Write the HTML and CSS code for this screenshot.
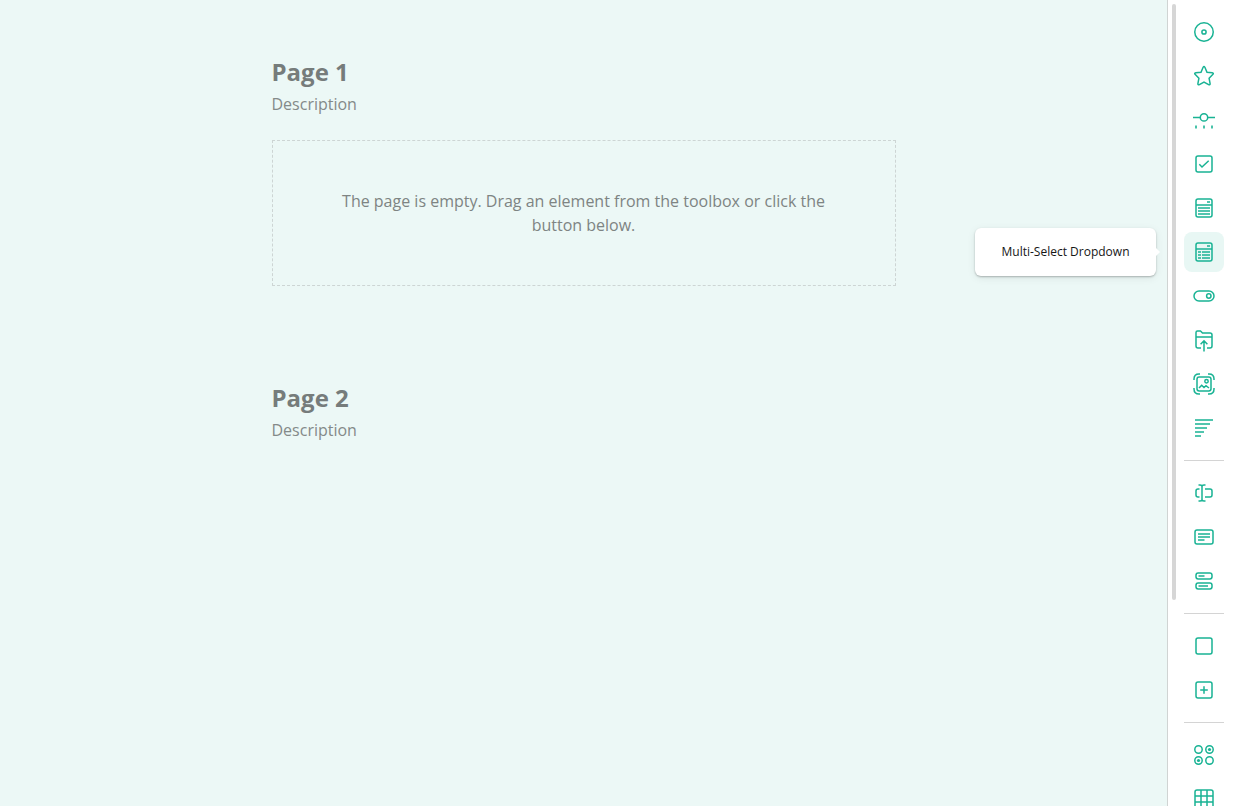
FILE: index.html
```html
<!DOCTYPE html>
<html lang="en">
<head>
<meta charset="utf-8">
<title>Survey designer</title>
<link rel="stylesheet" href="styles.css">
</head>
<body>
<div class="designer">
  <main class="surface">
    <section class="page">
      <h2 class="page-title">Page 1</h2>
      <p class="page-description">Description</p>
      <div class="placeholder"><p class="placeholder-text">The page is empty. Drag an element from the toolbox or click the button below.</p></div>
    </section>
    <section class="page">
      <h2 class="page-title">Page 2</h2>
      <p class="page-description">Description</p>
    </section>
  </main>
  <aside class="toolbox" aria-label="Toolbox">
    <div class="scroll-thumb"></div>
    <div class="group">
      <button class="tool" type="button" aria-label="Radio Button Group"><svg class="icon" viewBox="0 0 24 24"><circle cx="12" cy="12" r="9.25"/><circle cx="12" cy="12" r="2.1"/></svg></button>
      <button class="tool" type="button" aria-label="Rating Scale"><svg class="icon" viewBox="0 0 24 24"><path d="M11.1 3.3Q12 1.9 12.9 3.3L15 8.2L20.2 8.8Q22.2 9.2 20.7 10.5L17.1 14.3L18.1 19.5Q18.2 21.4 16.6 20.6L12 18L7.4 20.6Q5.8 21.4 5.9 19.5L6.9 14.3L3.3 10.5Q1.8 9.2 3.8 8.8L9 8.2Z"/></svg></button>
      <button class="tool" type="button" aria-label="Slider"><svg class="icon" viewBox="0 0 24 24"><circle cx="12" cy="9.4" r="3.7"/><path d="M1 9.4H8.3M15.7 9.4H23"/><path class="ticks" d="M4 17.5V20.5M12 17.5V20.5M20 17.5V20.5"/></svg></button>
      <button class="tool" type="button" aria-label="Checkboxes"><svg class="icon" viewBox="0 0 24 24"><rect x="4" y="4" width="16" height="16" rx="2"/><path d="M7.3 12.3L10 15L16.7 8.7"/></svg></button>
      <button class="tool" type="button" aria-label="Dropdown"><svg class="icon" viewBox="0 0 24 24"><rect x="4" y="3" width="16" height="18" rx="2"/><path d="M4 9H20M15 6H18M6 12H18M6 15H18M6 18H18"/></svg></button>
      <button class="tool tool-active" type="button" aria-label="Multi-Select Dropdown" aria-describedby="tip"><svg class="icon" viewBox="0 0 24 24"><rect x="4" y="3" width="16" height="18" rx="2"/><path d="M4 9H20M15 6H18M6 12H9M10 12H18M6 15H9M10 15H18M6 18H9M10 18H18"/></svg><span class="tooltip" id="tip" role="tooltip">Multi-Select Dropdown</span></button>
      <button class="tool" type="button" aria-label="Yes/No"><svg class="icon" viewBox="0 0 24 24"><rect x="2" y="7" width="20" height="10" rx="5"/><circle cx="16.8" cy="12" r="2.2"/></svg></button>
      <button class="tool" type="button" aria-label="File Upload"><svg class="icon" viewBox="0 0 24 24"><path d="M9 20H6Q4 20 4 18V4.5Q4 3 5.500 3H8.500L10.500 5H18Q20 5 20 7V18Q20 20 18 20H15M4 9H20M12 23.500V13M8.600 16.200L12 12.800L15.400 16.200"/></svg></button>
      <button class="tool" type="button" aria-label="Image Picker"><svg class="icon" viewBox="0 0 24 24"><rect x="5" y="5" width="14" height="14" rx="2.200"/><path d="M8 2H7Q2 2 2 7V8M16 2H17Q22 2 22 7V8M2 16V17Q2 22 7 22H8M22 16V17Q22 22 17 22H16M7 16L9.700 13.200L12 15.500L14 13.700L17 16"/><circle cx="14.500" cy="9.300" r="1.700"/></svg></button>
      <button class="tool" type="button" aria-label="Ranking"><svg class="icon" viewBox="0 0 24 24"><path d="M3 4H21M3 8H18M3 12H15M3 16H12M3 20H9"/></svg></button>
    </div>
    <hr class="separator">
    <div class="group">
      <button class="tool" type="button" aria-label="Single-Line Input"><svg class="icon" viewBox="0 0 24 24"><path d="M6.500 4H8Q10 4 10 5.500Q10 4 12 4H13.500M10 5V19M6.500 20H8Q10 20 10 18.500Q10 20 12 20H13.500M7.500 8H6Q4 8 4 10V14Q4 16 6 16H7.500M13 8H18Q20 8 20 10V14Q20 16 18 16H13"/></svg></button>
      <button class="tool" type="button" aria-label="Long Text"><svg class="icon" viewBox="0 0 24 24"><rect x="3" y="5" width="18" height="14" rx="2"/><path d="M6 9H18M6 12H18M6 15H12.500"/></svg></button>
      <button class="tool" type="button" aria-label="Multiple Textboxes"><svg class="icon" viewBox="0 0 24 24"><rect x="4" y="4" width="16" height="6" rx="2.200"/><rect x="4" y="14" width="16" height="6" rx="2.200"/><path d="M6.500 7H12.500M6.500 17H16"/></svg></button>
    </div>
    <hr class="separator">
    <div class="group">
      <button class="tool" type="button" aria-label="Panel"><svg class="icon" viewBox="0 0 24 24"><rect x="4" y="4" width="16" height="16" rx="2"/></svg></button>
      <button class="tool" type="button" aria-label="Dynamic Panel"><svg class="icon" viewBox="0 0 24 24"><rect x="4" y="4" width="16" height="16" rx="2"/><path d="M8.200 12H15.800M12 8.200V15.800"/></svg></button>
    </div>
    <hr class="separator">
    <div class="group">
      <button class="tool" type="button" aria-label="Single-Select Matrix"><svg class="icon" viewBox="0 0 24 24"><circle cx="6.500" cy="6.500" r="3.700"/><circle cx="17.500" cy="6.500" r="3.700"/><circle cx="6.500" cy="17.500" r="3.700"/><circle cx="17.500" cy="17.500" r="3.700"/><circle class="dot" cx="17.500" cy="6.500" r="1.600"/><circle class="dot" cx="6.500" cy="17.500" r="1.600"/></svg></button>
      <button class="tool" type="button" aria-label="Multi-Select Matrix"><svg class="icon" viewBox="0 0 24 24"><rect x="3" y="3" width="18" height="18" rx="2"/><path d="M9 3V21M15 3V21M3 9H21M3 15H21"/></svg></button>
    </div>
  </aside>
</div>
</body>
</html>
```
FILE: styles.css
```css
body {
  margin: 0;
  font-family: "Open Sans", sans-serif;
  font-size: 16px;
  line-height: 24px;
}

.designer {
  display: flex;
  height: 100vh;
  overflow: hidden;
}

.surface {
  flex: 1;
  display: flex;
  flex-direction: column;
  align-items: center;
  gap: 96px;
  padding: 56px 24px;
  background: #ecf8f6;
}

.page {
  width: 100%;
  max-width: 624px;
}

.page-title {
  margin: 0;
  font-size: 24px;
  line-height: 32px;
  font-weight: 700;
  color: #767c7b;
}

.page-description {
  margin: 4px 0 0;
  color: #848a89;
}

.placeholder {
  margin-top: 24px;
  padding: 48px 64px;
  border: 1px dashed #cdd5d4;
  text-align: center;
  color: #7e8483;
}

.placeholder-text {
  margin: 0;
}

.toolbox {
  position: relative;
  padding: 12px 16px;
  border-left: 1px solid #d0d4d3;
  background: #fff;
}

.scroll-thumb {
  position: absolute;
  top: 4px;
  left: 4px;
  width: 4px;
  height: 74%;
  border-radius: 2px;
  background: #d6d6d6;
}

.group {
  display: flex;
  flex-direction: column;
  gap: 4px;
}

.separator {
  height: 1px;
  margin: 12px 0;
  border: 0;
  background: #d4d4d4;
}

.tool {
  position: relative;
  display: flex;
  align-items: center;
  justify-content: center;
  width: 40px;
  height: 40px;
  padding: 0;
  border: 0;
  border-radius: 8px;
  background: transparent;
  font-family: inherit;
}

.tool-active {
  background: #e8f7f4;
}

.icon {
  width: 24px;
  height: 24px;
  fill: none;
  stroke: #19b394;
  stroke-width: 1.5;
}

.icon .ticks {
  stroke-width: 2;
  stroke-opacity: 0.8;
}

.icon .dot {
  fill: #19b394;
  stroke: none;
}

.tooltip {
  position: absolute;
  top: -4px;
  right: 68px;
  min-width: 133px;
  padding: 16px 24px;
  border-radius: 6px;
  background: #fff;
  box-shadow: 0 1px 2px rgba(0, 0, 0, 0.25), 0 2px 8px rgba(0, 0, 0, 0.08);
  font-size: 12px;
  line-height: 16px;
  white-space: nowrap;
  color: #161616;
}

.tooltip::after {
  content: "";
  position: absolute;
  top: 20px;
  left: 100%;
  border: 4px solid transparent;
  border-left-color: #fff;
  border-right-width: 0;
}
```
